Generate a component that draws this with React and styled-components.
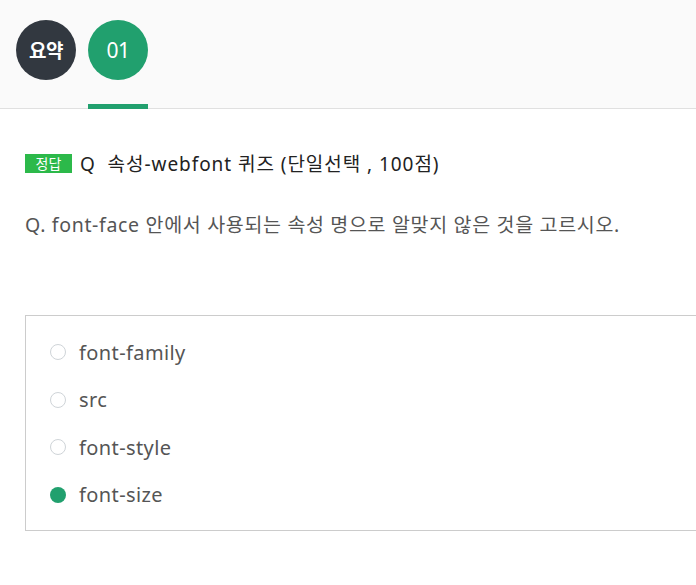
import React from "react";
import styled, { createGlobalStyle } from "styled-components";

const Global = createGlobalStyle`
	html, body {
		margin: 0;
		padding: 0;
		background: #fff;
		overflow: hidden;
	}
	body {
		font-family: "Noto Sans", "Noto Sans CJK KR", sans-serif;
	}
`;

const Page = styled.div`
	width: 760px;
`;

const Header = styled.div`
	display: flex;
	align-items: flex-start;
	gap: 12px;
	height: 109px;
	padding: 20px 0 0 16px;
	box-sizing: border-box;
	background: #fafafa;
	border-bottom: 1px solid #e0e0e0;
`;

const Tab = styled.div`
	display: flex;
	flex-direction: column;
	align-items: center;
	height: 89px;
	width: 60px;
	box-sizing: border-box;
	border-bottom: 5px solid ${(p) => (p.active ? "#21a06e" : "transparent")};
`;

const Circle = styled.div`
	width: 60px;
	height: 60px;
	border-radius: 50%;
	background: ${(p) => p.bg};
	color: #fff;
	display: flex;
	align-items: center;
	justify-content: center;
	font-size: ${(p) => (p.bold ? "19px" : "21px")};
	font-weight: ${(p) => (p.bold ? 700 : 400)};
	letter-spacing: -0.5px;
`;

const Body = styled.div`
	padding: 0 0 0 25px;
`;

const Title = styled.div`
	display: flex;
	align-items: center;
	margin-top: 40px;
	font-size: 19px;
	color: #222;
	letter-spacing: 0.95px;
	white-space: pre;
`;

const Badge = styled.span`
	display: inline-flex;
	align-items: center;
	justify-content: center;
	width: 47px;
	height: 19px;
	background: #2cb94a;
	color: #fff;
	font-size: 14px;
	letter-spacing: 0;
	margin-right: 8px;
`;

const Question = styled.p`
	margin: 32px 0 0;
	font-size: 19.5px;
	color: #555;
	letter-spacing: 0.68px;
`;

const Options = styled.div`
	margin-top: 77px;
	border: 1px solid #ccc;
	padding: 23px 0 22px 24px;
	display: flex;
	flex-direction: column;
	gap: 21.5px;
`;

const Option = styled.label`
	display: flex;
	align-items: center;
	gap: 13px;
	height: 26px;
	font-size: 20px;
	color: #555;
	letter-spacing: 0.4px;
`;

const Radio = styled.span`
	width: 16px;
	height: 16px;
	border-radius: 50%;
	box-sizing: border-box;
	border: ${(p) => (p.checked ? "none" : "1px solid #cfd4d8")};
	background: ${(p) => (p.checked ? "#21a06e" : "#fff")};
`;

const options = [
	{ text: "font-family" },
	{ text: "src" },
	{ text: "font-style" },
	{ text: "font-size", checked: true },
];

export default function App() {
	return (
		<Page>
			<Global />
			<Header>
				<Tab>
					<Circle bg="#323840" bold>요약</Circle>
				</Tab>
				<Tab active>
					<Circle bg="#21a06e">01</Circle>
				</Tab>
			</Header>
			<Body>
				<Title>
					<Badge>정답</Badge>
					{"Q  속성-webfont 퀴즈 (단일선택 , 100점)"}
				</Title>
				<Question>
					Q. font-face 안에서 사용되는 속성 명으로 알맞지 않은 것을 고르시오.
				</Question>
				<Options>
					{options.map((o) => (
						<Option key={o.text}>
							<Radio checked={o.checked} />
							{o.text}
						</Option>
					))}
				</Options>
			</Body>
		</Page>
	);
}
